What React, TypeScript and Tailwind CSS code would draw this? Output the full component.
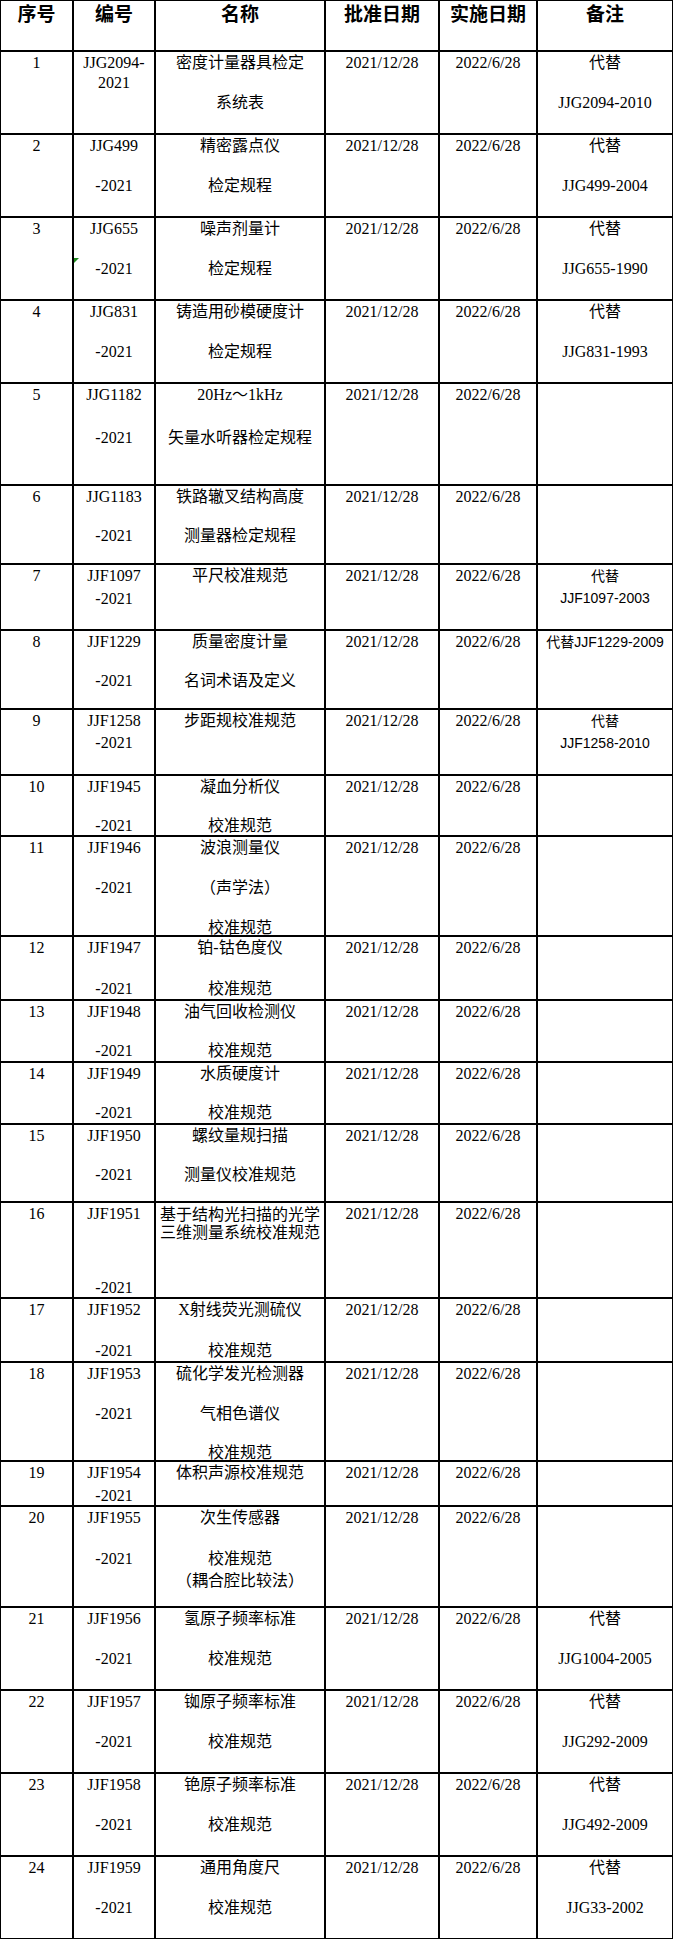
import React from "react";

type Line = { t: string; c?: string; s?: boolean };
type Row = {
  h: string;
  no: string;
  code: Line[];
  name: Line[];
  remark: Line[];
  mark?: boolean;
};

const two = (a: string, b: string, c = "mt-[20px]"): Line[] => [{ t: a }, { t: b, c }];
const sansTwo = (a: string, b: string): Line[] => [
  { t: a, s: true, c: "mt-[-1px]" },
  { t: b, s: true },
];

const rows: Row[] = [
  { h: "h-[83px]", no: "1", code: two("JJG2094-", "2021", "mt-0"), name: two("密度计量器具检定", "系统表"), remark: two("代替", "JJG2094-2010") },
  { h: "h-[83px]", no: "2", code: two("JJG499", "-2021"), name: two("精密露点仪", "检定规程"), remark: two("代替", "JJG499-2004") },
  { h: "h-[83px]", no: "3", code: two("JJG655", "-2021"), name: two("噪声剂量计", "检定规程"), remark: two("代替", "JJG655-1990"), mark: true },
  { h: "h-[83px]", no: "4", code: two("JJG831", "-2021"), name: two("铸造用砂模硬度计", "检定规程"), remark: two("代替", "JJG831-1993") },
  { h: "h-[102px]", no: "5", code: two("JJG1182", "-2021", "mt-[23px]"), name: two("20Hz～1kHz", "矢量水听器检定规程", "mt-[23px]"), remark: [] },
  { h: "h-[79px]", no: "6", code: two("JJG1183", "-2021", "mt-[19px]"), name: two("铁路辙叉结构高度", "测量器检定规程", "mt-[19px]"), remark: [] },
  { h: "h-[66px]", no: "7", code: two("JJF1097", "-2021", "mt-[3px]"), name: [{ t: "平尺校准规范" }], remark: sansTwo("代替", "JJF1097-2003") },
  { h: "h-[79px]", no: "8", code: two("JJF1229", "-2021", "mt-[19px]"), name: two("质量密度计量", "名词术语及定义", "mt-[19px]"), remark: [{ t: "代替JJF1229-2009", s: true, c: "mt-[-1px]" }] },
  { h: "h-[66px]", no: "9", code: two("JJF1258", "-2021", "mt-[2px]"), name: [{ t: "步距规校准规范" }], remark: sansTwo("代替", "JJF1258-2010") },
  { h: "h-[61px]", no: "10", code: two("JJF1945", "-2021", "mt-[19px]"), name: two("凝血分析仪", "校准规范", "mt-[19px]"), remark: [] },
  {
    h: "h-[100px]",
    no: "11",
    code: two("JJF1946", "-2021"),
    name: [{ t: "波浪测量仪" }, { t: "（声学法）", c: "mt-[20px]" }, { t: "校准规范", c: "mt-[20px]" }],
    remark: [],
  },
  { h: "h-[64px]", no: "12", code: two("JJF1947", "-2021", "mt-[21px]"), name: two("铂-钴色度仪", "校准规范", "mt-[21px]"), remark: [] },
  { h: "h-[62px]", no: "13", code: two("JJF1948", "-2021", "mt-[19px]"), name: two("油气回收检测仪", "校准规范", "mt-[19px]"), remark: [] },
  { h: "h-[62px]", no: "14", code: two("JJF1949", "-2021", "mt-[19px]"), name: two("水质硬度计", "校准规范", "mt-[19px]"), remark: [] },
  { h: "h-[78px]", no: "15", code: two("JJF1950", "-2021", "mt-[19px]"), name: two("螺纹量规扫描", "测量仪校准规范", "mt-[19px]"), remark: [] },
  {
    h: "h-[96px]",
    no: "16",
    code: two("JJF1951", "-2021", "mt-[54px]"),
    name: [{ t: "基于结构光扫描的光学", c: "mt-px" }, { t: "三维测量系统校准规范", c: "mt-[-2px]" }],
    remark: [],
  },
  { h: "h-[64px]", no: "17", code: two("JJF1952", "-2021", "mt-[21px]"), name: two("X射线荧光测硫仪", "校准规范", "mt-[21px]"), remark: [] },
  {
    h: "h-[99px]",
    no: "18",
    code: two("JJF1953", "-2021"),
    name: [{ t: "硫化学发光检测器" }, { t: "气相色谱仪", c: "mt-[20px]" }, { t: "校准规范", c: "mt-[19px]" }],
    remark: [],
  },
  { h: "h-[45px]", no: "19", code: two("JJF1954", "-2021", "mt-[3px]"), name: [{ t: "体积声源校准规范" }], remark: [] },
  {
    h: "h-[101px]",
    no: "20",
    code: two("JJF1955", "-2021", "mt-[21px]"),
    name: [{ t: "次生传感器" }, { t: "校准规范", c: "mt-[21px]" }, { t: "（耦合腔比较法）", c: "mt-[2px]" }],
    remark: [],
  },
  { h: "h-[83px]", no: "21", code: two("JJF1956", "-2021"), name: two("氢原子频率标准", "校准规范"), remark: two("代替", "JJG1004-2005") },
  { h: "h-[83px]", no: "22", code: two("JJF1957", "-2021"), name: two("铷原子频率标准", "校准规范"), remark: two("代替", "JJG292-2009") },
  { h: "h-[83px]", no: "23", code: two("JJF1958", "-2021"), name: two("铯原子频率标准", "校准规范"), remark: two("代替", "JJG492-2009") },
  { h: "h-[83px]", no: "24", code: two("JJF1959", "-2021"), name: two("通用角度尺", "校准规范"), remark: two("代替", "JJG33-2002") },
];

const widths = ["w-[73px]", "w-[82px]", "w-[170px]", "w-[114px]", "w-[98px]", "w-[136px]"];

function Cell({ w, lines, children }: { w: string; lines: Line[]; children?: React.ReactNode }) {
  return (
    <div className={`${w} relative flex shrink-0 flex-col items-center border border-black pt-px text-center`}>
      {lines.map((l, i) => (
        <div
          key={i}
          className={`${
            l.s
              ? "h-[22px] font-[family-name:'Liberation_Sans','Noto_Sans_CJK_SC',sans-serif] text-[14px] leading-[22px]"
              : "h-[20px] leading-[20px]"
          } whitespace-nowrap ${l.c ?? ""}`}
        >
          {l.t}
        </div>
      ))}
      {children}
    </div>
  );
}

const headers = ["序号", "编号", "名称", "批准日期", "实施日期", "备注"];

export default function App() {
  return (
    <div className="w-[673px] bg-white font-[family-name:'Liberation_Serif','Noto_Sans_CJK_SC',serif] text-[16px] text-black">
      <div className="flex h-[51px]">
        {headers.map((h, i) => (
          <div
            key={h}
            className={`${widths[i]} shrink-0 border border-black text-center text-[19px] font-bold leading-[28px]`}
          >
            {h}
          </div>
        ))}
      </div>
      {rows.map((r) => (
        <div key={r.no} className={`flex ${r.h}`}>
          <Cell w={widths[0]} lines={[{ t: r.no }]} />
          <Cell w={widths[1]} lines={r.code}>
            {r.mark && (
              <svg className="absolute left-0 top-[40px]" width="5" height="5" viewBox="0 0 5 5">
                <polygon points="0,0 5,0 0,5" fill="#1e8a1e" />
              </svg>
            )}
          </Cell>
          <Cell w={widths[2]} lines={r.name} />
          <Cell w={widths[3]} lines={[{ t: "2021/12/28" }]} />
          <Cell w={widths[4]} lines={[{ t: "2022/6/28" }]} />
          <Cell w={widths[5]} lines={r.remark} />
        </div>
      ))}
    </div>
  );
}
